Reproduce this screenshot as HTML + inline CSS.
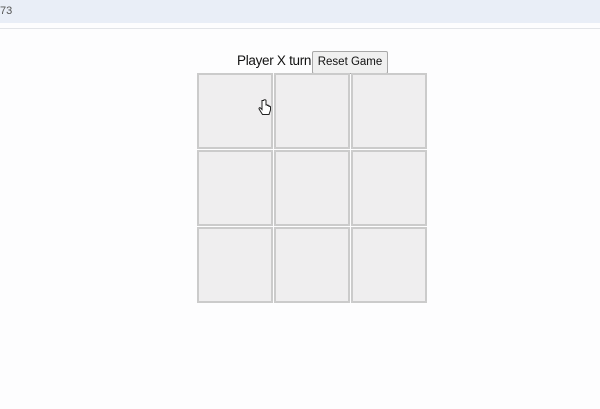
<html><head><style>
body{margin:0;width:600px;height:409px;background:#fdfdfe;font-family:"Liberation Sans",sans-serif;position:relative;overflow:hidden}
.top{position:absolute;left:0;top:0;width:600px;height:23px;background:#e9eef7;font-size:11px;color:#555}
.line{position:absolute;left:0;top:28px;width:600px;height:1px;background:#e2e4e8}
.t{position:absolute;left:237px;top:53px;font-size:13.5px;color:#111;letter-spacing:-0.3px}
.b{position:absolute;left:312px;top:51px;width:74px;height:21px;border:1px solid #a8a8a8;border-radius:2px;background:#f0f0f0;font-size:11.5px;text-align:center;line-height:21px;color:#111}
.c{position:absolute;width:72px;height:72px;border:2px solid #cbcbcb;background:#efeeef}
</style></head><body>
<div class="top"><span style="position:absolute;left:0;top:5px">73</span></div>
<div class="line"></div>
<div class="t">Player X turn</div>
<div class="b">Reset Game</div>
<div class="c" style="left:197px;top:73px"></div>
<div class="c" style="left:274px;top:73px"></div>
<div class="c" style="left:351px;top:73px"></div>
<div class="c" style="left:197px;top:150px"></div>
<div class="c" style="left:274px;top:150px"></div>
<div class="c" style="left:351px;top:150px"></div>
<div class="c" style="left:197px;top:227px"></div>
<div class="c" style="left:274px;top:227px"></div>
<div class="c" style="left:351px;top:227px"></div>
<svg style="position:absolute;left:258px;top:99px" width="14" height="18" viewBox="0 0 14 18"><path d="M4 1.5v9l-1.5-1.5c-1-.8-2 .2-1.3 1.2L4.5 15.5h6.5l1.5-4.5V8c0-1-1.5-1-1.5 0V7c0-1-1.5-1-1.5 0V6.5c0-1-1.5-1-1.5 0V1.5c0-1-2.5-1-2.5 0z" fill="#fff" stroke="#222" stroke-width="1"/></svg>
</body></html>
